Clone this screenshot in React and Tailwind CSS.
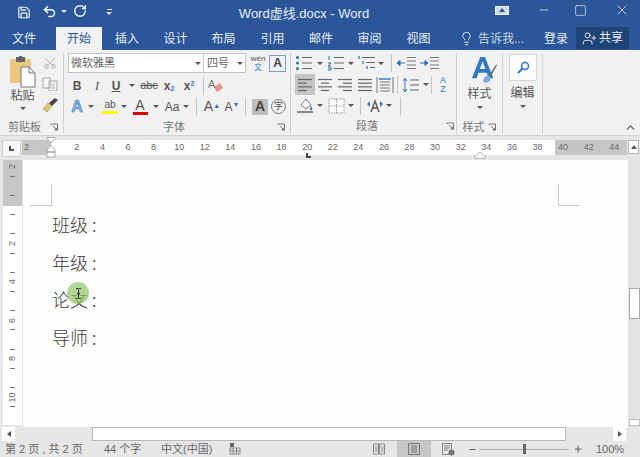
import React from 'react';
import { Save, Undo2, RotateCw, Minus, Square, X, Lightbulb, UserPlus, Scissors, ChevronUp, Plus } from 'lucide-react';

const Caret = ({ w = 'w-[10px]', color = 'border-t-[#555]' }) => (
  <span className={`${w} flex justify-center shrink-0`}>
    <span className={`w-0 h-0 border-x-[3px] border-x-transparent border-t-[3px] ${color}`}></span>
  </span>
);

const Launcher = () => (
  <svg width="9" height="9" viewBox="0 0 9 9" className="shrink-0">
    <path d="M1 1h6.5v6.5M1 1v1M3 3l4 4" fill="none" stroke="#777" strokeWidth="1" />
    <path d="M4 7.5h3.5V4z" fill="#777" />
  </svg>
);

const Divider = ({ cls = 'h-[18px]' }) => <span className={`w-px bg-[#c6c6c6] shrink-0 block ${cls}`}></span>;

// lines used by the list and alignment buttons, each row is [x1, x2]
const Lines = ({ rows, stroke = '#666' }) => (
  <svg width="18" height="14" viewBox="0 0 18 14">
    {rows.map((r, i) => (
      <line key={i} x1={r[0]} x2={r[1]} y1={1.5 + i * (11 / (rows.length - 1))} y2={1.5 + i * (11 / (rows.length - 1))} stroke={stroke} strokeWidth="1.2" />
    ))}
  </svg>
);

const Cell = ({ w = 'w-[20px]', children }) => (
  <span className={`${w} h-[20px] flex items-center justify-center shrink-0`}>{children}</span>
);

const BulletList = () => (
  <svg width="18" height="16" viewBox="0 0 18 16">
    <circle cx="2.5" cy="2.5" r="1.5" fill="#2b6cb0" /><circle cx="2.5" cy="8" r="1.5" fill="#2b6cb0" /><circle cx="2.5" cy="13.5" r="1.5" fill="#2b6cb0" />
    <path d="M7 2.5h10M7 8h10M7 13.5h10" stroke="#666" strokeWidth="1.1" />
  </svg>
);

const NumberList = () => (
  <svg width="18" height="16" viewBox="0 0 18 16">
    <path d="M2 1v4M1 8h3l-3 3h3M1 13h3v2H1" stroke="#2b6cb0" strokeWidth="1" fill="none" />
    <path d="M7 2.5h10M7 8h10M7 13.5h10" stroke="#666" strokeWidth="1.1" />
  </svg>
);

const MultiList = () => (
  <svg width="18" height="16" viewBox="0 0 18 16">
    <path d="M1 1v3M5 6v3M9 11v3" stroke="#2b6cb0" strokeWidth="1.2" />
    <path d="M4 2.5h13M8 7.5h9M12 12.5h5" stroke="#666" strokeWidth="1.1" />
  </svg>
);

const Indent = ({ flip }) => (
  <svg width="19" height="14" viewBox="0 0 19 14">
    <path d="M10 1.500h9M10 5h9M10 9h9M10 12.500h9" stroke="#777" strokeWidth="1" />
    {flip
      ? <path d="M0 7h5M5 4.500L8 7l-3 2.500z" stroke="#2b6cb0" strokeWidth="1" fill="#2b6cb0" />
      : <path d="M8 7H3M3 4.500L0 7l3 2.500z" stroke="#2b6cb0" strokeWidth="1" fill="#2b6cb0" />}
  </svg>
);

const ClipboardIcon = () => (
  <svg width="28" height="32" viewBox="0 0 28 32">
    <rect x="1" y="3" width="21" height="24" rx="1.5" fill="#e9c77f" />
    <rect x="7" y="1" width="9" height="5" fill="#666" />
    <rect x="10" y="0" width="3" height="2" fill="#666" />
    <path d="M12 11h8l6 6v14H12z" fill="#fff" stroke="#777" strokeWidth="1" />
    <path d="M20 11v6h6" fill="none" stroke="#777" strokeWidth="1" />
  </svg>
);

const CopyIcon = () => (
  <svg width="16" height="14" viewBox="0 0 16 14">
    <path d="M1 1h7v10H1zM7 4h8v10H7z" fill="#f6f6f6" stroke="#aaa" strokeWidth="1" />
    <path d="M9 7h4M9 9h4M9 11h4" stroke="#bbb" strokeWidth="1" />
  </svg>
);

const PainterIcon = () => (
  <svg width="16" height="14" viewBox="0 0 16 14">
    <path d="M1 11l5-6 4 3-5 6z" fill="#e3c27d" stroke="#a58a50" strokeWidth=".6" />
    <path d="M7 5l6-5 3 2-6 6z" fill="#444" />
  </svg>
);

const StylesIcon = () => (
  <svg width="26" height="28" viewBox="0 0 28 30">
    <path d="M1 24L10 1h5l9 23h-5l-2-6H8l-2 6zM9.5 14h6L12.5 5.500z" fill="#2f77bf" />
    <path d="M13 28c0-4 3-7 6-7l2 2c0 4-3 7-8 5z" fill="#7fa9d6" />
    <path d="M20 20l7-11 1 1-6 11z" fill="#666" />
  </svg>
);

const rulerNumbers = [2, 4, 6, 8, 10, 12, 14, 16, 18, 20, 22, 24, 26, 28, 30, 32, 34, 36, 38, 40, 42, 44];
const vRuler = ['2', 't', 'b', 't', 'b', 't', 'b', 't', '2', 't', 'b', 't', '4', 't', 'b', 't', '6', 't', 'b', 't', '8', 't', 'b', 't', '10', 't', 'b'];

const TitleBar = () => (
  <div className="h-[27px] flex items-center text-[#f2f5fa] shrink-0">
    <span className="ml-[17px] w-[14px] flex -mt-[3px]"><Save size={15} strokeWidth={2} /></span>
    <span className="ml-[11px] w-[16px] flex -mt-[5px]"><Undo2 size={15} strokeWidth={2.4} /></span>
    <span className="ml-[3px] w-[8px] flex -mt-[4px]"><Caret w="w-[6px]" color="border-t-[#dfe6f1]" /></span>
    <span className="ml-[4px] w-[16px] flex -mt-[6px]"><RotateCw size={14} strokeWidth={2.4} /></span>
    <span className="ml-[16px] w-[8px] flex flex-col items-center gap-[2px] -mt-[3px]">
      <span className="w-[5px] h-px bg-[#dfe6f1]"></span>
      <Caret w="w-[6px]" color="border-t-[#dfe6f1]" />
    </span>
    <span className="w-[382px] text-center text-[13px] leading-none text-[#e9eef6]">Word虚线.docx - Word</span>
    <span className="w-[14px] h-[9px] border border-[#eef2f8] bg-[#cfdaea] flex items-center justify-center -mt-[7px]">
      <span className="w-0 h-0 border-x-[3px] border-x-transparent border-b-[4px] border-b-[#2b579a]"></span>
    </span>
    <span className="ml-[28px] flex -mt-[7px]"><Minus size={14} strokeWidth={1.2} /></span>
    <span className="ml-[23px] flex -mt-[7px]"><Square size={13} strokeWidth={1.2} /></span>
    <span className="ml-[27px] flex -mt-[7px]"><X size={16} strokeWidth={1.1} /></span>
  </div>
);

const Tabs = () => (
  <div className="h-[23px] flex items-stretch text-[12px] text-[#e8edf5] shrink-0">
    <span className="w-[48px] flex items-center justify-center">文件</span>
    <span className="ml-[8px] w-[46px] flex items-center justify-center bg-[#f1f1f1] text-[#2b579a]">开始</span>
    <span className="w-[50px] flex items-center justify-center">插入</span>
    <span className="w-[47px] flex items-center justify-center">设计</span>
    <span className="w-[49px] flex items-center justify-center">布局</span>
    <span className="w-[49px] flex items-center justify-center">引用</span>
    <span className="w-[48px] flex items-center justify-center">邮件</span>
    <span className="w-[49px] flex items-center justify-center">审阅</span>
    <span className="w-[49px] flex items-center justify-center">视图</span>
    <span className="ml-[16px] w-[73px] flex items-center text-[#c9d6e8]">
      <Lightbulb size={15} strokeWidth={1.4} className="mr-[4px] text-[#eef2f8]" />告诉我...
    </span>
    <span className="ml-[12px] flex items-center">登录</span>
    <span className="ml-[8px] w-[53px] mb-[1px] flex items-center justify-center gap-[2px] bg-[#1f4478]">
      <UserPlus size={15} strokeWidth={1.5} />共享
    </span>
  </div>
);

const ClipboardGroup = () => (
  <div className="w-[64px] shrink-0 flex flex-col border-r border-[#d0d0d0] mt-[3px] mb-[2px] h-[81px] text-[#555]">
    <div className="flex h-[66px]">
      <div className="w-[40px] flex flex-col items-center pl-[5px]">
        <span className="mt-[3px] flex"><ClipboardIcon /></span>
        <span className="text-[12px] leading-[14px] mt-[1px]">粘贴</span>
        <span className="mt-[4px]"><Caret /></span>
      </div>
      <div className="w-[20px] flex flex-col items-center gap-[7px] pt-[3px]">
        <Scissors size={14} strokeWidth={1.2} className="text-[#999] -rotate-90" />
        <CopyIcon />
        <PainterIcon />
      </div>
    </div>
    <div className="flex items-center mt-[1px] pl-[8px] text-[11px] leading-[14px] text-[#777]">
      <span>剪贴板</span>
      <span className="ml-[9px]"><Launcher /></span>
    </div>
  </div>
);

const FontGroup = () => (
  <div className="w-[227px] shrink-0 flex flex-col border-r border-[#d0d0d0] mt-[3px] mb-[2px] h-[81px] text-[#555]">
    <div className="flex items-center h-[20px] pl-[4px]">
      <span className="w-[136px] h-[20px] border border-[#c4c4c4] bg-white flex items-center justify-between pl-[2px] text-[11px] text-[#666]">
        微软雅黑<Caret />
      </span>
      <span className="w-[42px] h-[20px] border border-l-0 border-[#c4c4c4] bg-white flex items-center justify-between pl-[3px] text-[11px] text-[#666]">
        四号<Caret />
      </span>
      <span className="w-[22px] flex flex-col items-center text-[8px] leading-[9px] ml-[1px]">
        <span className="text-[#555]">wén</span>
        <span className="text-[#2f77bf]">文</span>
      </span>
      <span className="w-[17px] h-[17px] border border-[#7f9fc6] bg-[#eef2f7] flex items-center justify-center text-[12px] font-bold text-[#444]">A</span>
    </div>
    <div className="flex items-center h-[21px] mt-[2px] pl-[3px] text-[#555]">
      <Cell><b className="text-[12px]">B</b></Cell>
      <Cell><i className="text-[12px] [font-family:'Liberation_Serif',serif]">I</i></Cell>
      <Cell w="w-[18px]"><u className="text-[12px] font-bold">U</u></Cell>
      <Caret w="w-[14px]" />
      <Cell><s className="text-[11px]">abc</s></Cell>
      <Cell><span className="text-[12px] font-bold">x<sub className="text-[7px] text-[#2f77bf]">2</sub></span></Cell>
      <Cell><span className="text-[12px] font-bold">x<sup className="text-[7px] text-[#2f77bf]">2</sup></span></Cell>
      <span className="ml-[4px]"><Divider /></span>
      <span className="ml-[4px]">
        <svg width="16" height="16" viewBox="0 0 16 16">
          <path d="M6 9l6-4 3 5-6 4z" fill="#e98f8f" />
          <text x="0" y="10" fontSize="11" fill="#777" fontFamily="Liberation Sans">A</text>
        </svg>
      </span>
    </div>
    <div className="flex items-center h-[21px] pl-[3px]">
      <Cell><span className="text-[16px] font-bold text-[#8fb8e6] [-webkit-text-stroke:0.6px_#2f77bf]">A</span></Cell>
      <Caret w="w-[7px]" />
      <span className="ml-[7px] w-[18px] flex flex-col items-center text-[10px] leading-[12px]">
        <span>ab</span><span className="w-[16px] h-[3px] bg-[#ffff00]"></span>
      </span>
      <Caret w="w-[10px]" />
      <span className="ml-[3px] w-[16px] flex flex-col items-center text-[14px] leading-[14px] text-[#555]">
        <span>A</span><span className="w-[15px] h-[3px] bg-[#e00000]"></span>
      </span>
      <Caret w="w-[15px]" />
      <span className="w-[18px] text-[12px] text-center">Aa</span>
      <Caret w="w-[9px]" />
      <span className="ml-[6px]"><Divider /></span>
      <span className="ml-[5px] w-[20px] text-[14px] text-center">A<sup className="text-[7px] text-[#2f77bf]">▲</sup></span>
      <span className="w-[20px] text-[12px] text-center">A<sup className="text-[7px] text-[#2f77bf]">▼</sup></span>
      <span className="ml-[3px]"><Divider /></span>
      <span className="ml-[6px] w-[16px] h-[16px] bg-[#bdbdbd] flex items-center justify-center text-[14px] font-bold text-[#444]">A</span>
      <span className="ml-[3px] w-[15px] h-[15px] rounded-full border border-[#777] flex items-center justify-center text-[9px]">字</span>
    </div>
    <div className="flex items-center mt-[3px] h-[14px] text-[11px] leading-[14px] text-[#777]">
      <span className="ml-[95px] w-[30px] text-center">字体</span>
      <span className="ml-[88px]"><Launcher /></span>
    </div>
  </div>
);

const ParagraphGroup = () => (
  <div className="w-[166px] shrink-0 flex flex-col border-r border-[#d0d0d0] mt-[3px] mb-[2px] h-[81px] text-[#555]">
    <div className="flex items-center h-[20px] pl-[3px]">
      <Cell><BulletList /></Cell>
      <Caret w="w-[12px]" />
      <Cell><NumberList /></Cell>
      <Caret />
      <span className="ml-px"><Cell><MultiList /></Cell></span>
      <Caret w="w-[8px]" />
      <span className="ml-[6px]"><Divider /></span>
      <span className="ml-[4px]"><Cell><Indent /></Cell></span>
      <span className="ml-[3px]"><Cell><Indent flip /></Cell></span>
    </div>
    <div className="flex items-center h-[21px] mt-[1px] pl-[4px]">
      <span className="w-[20px] h-[21px] bg-[#c4c4c4] flex items-center justify-center"><Lines rows={[[2, 16], [2, 11], [2, 16], [2, 11]]} /></span>
      <Cell><Lines rows={[[2, 16], [5, 13], [2, 16], [5, 13]]} /></Cell>
      <Cell><Lines rows={[[2, 16], [7, 16], [2, 16], [7, 16]]} /></Cell>
      <Cell><Lines rows={[[2, 16], [2, 16], [2, 16], [2, 16]]} /></Cell>
      <Cell>
        <svg width="18" height="16" viewBox="0 0 18 16">
          <path d="M1 0v16M17 0v16M4 5h10M4 8h10M4 11h10M4 14h10" stroke="#777" strokeWidth="1" />
          <path d="M3 2h12" stroke="#2f77bf" strokeWidth="1.4" />
        </svg>
      </Cell>
      <span className="ml-[2px]"><Divider /></span>
      <span className="ml-[3px]">
        <Cell>
          <svg width="16" height="16" viewBox="0 0 16 16">
            <path d="M2 1v14M0 4l2-3 2 3M0 12l2 3 2-3" stroke="#2f77bf" strokeWidth="1" fill="none" />
            <path d="M7 3h9M7 8h9M7 13h9" stroke="#666" strokeWidth="1.1" />
          </svg>
        </Cell>
      </span>
      <Caret />
      <Divider />
      <span className="ml-[1px]"><Cell><span className="text-[9px] leading-[9px] text-[#2f77bf] text-center">A<br />Z</span></Cell></span>
    </div>
    <div className="flex items-center h-[21px] pl-[4px]">
      <Cell>
        <svg width="18" height="17" viewBox="0 0 18 17">
          <path d="M5 8l5-6 5 6-5 4z" fill="#fff" stroke="#777" strokeWidth="1" />
          <path d="M15 9c1 2 2 3 1 4s-2 0-2-1z" fill="#2f77bf" />
          <path d="M1 15h16" stroke="#888" strokeWidth="2" />
        </svg>
      </Cell>
      <Caret />
      <span className="ml-px"><Cell>
        <svg width="17" height="16" viewBox="0 0 17 16">
          <path d="M1 1h15v14H1zM8.500 1v14M1 8h15" fill="#fff" stroke="#999" strokeWidth="1" strokeDasharray="1.500 1" />
        </svg>
      </Cell></span>
      <Caret />
      <span className="ml-[4px]"><Divider /></span>
      <span className="ml-[4px]"><Cell>
        <svg width="18" height="15" viewBox="0 0 18 15">
          <path d="M5 14L9 3l4 11M6.500 10h5" stroke="#555" strokeWidth="1.400" fill="none" />
          <path d="M1 6l3-3v6zM17 6l-3-3v6z" fill="#2f77bf" />
        </svg>
      </Cell></span>
      <Caret w="w-[8px]" />
      <span className="ml-[7px]"><Divider /></span>
    </div>
    <div className="flex items-center mt-[3px] h-[14px] text-[11px] leading-[14px] text-[#777]">
      <span className="ml-[61px] w-[30px] text-center">段落</span>
      <span className="ml-[64px]"><Launcher /></span>
    </div>
  </div>
);

const StylesGroup = () => (
  <div className="w-[46px] shrink-0 flex flex-col items-center border-r border-[#d0d0d0] mt-[3px] mb-[2px] h-[81px] text-[#555]">
    <div className="h-[66px] flex flex-col items-center">
      <span className="mt-[3px] ml-[8px] w-[26px] flex"><StylesIcon /></span>
      <span className="text-[12px] leading-[14px] mt-[3px]">样式</span>
      <span className="mt-[5px]"><Caret /></span>
    </div>
    <div className="flex items-center mt-[1px] text-[11px] leading-[14px] text-[#777] gap-[3px]">
      <span>样式</span><Launcher />
    </div>
  </div>
);

const EditGroup = () => (
  <div className="w-[40px] shrink-0 flex flex-col items-center border-r border-[#d0d0d0] mt-[3px] mb-[2px] h-[81px] text-[#555]">
    <span className="mt-px w-[28px] h-[27px] bg-[#fbfbfb] border border-[#d6d6d6] flex items-center justify-center">
      <svg width="14" height="14" viewBox="0 0 14 14">
        <circle cx="9" cy="5" r="3.500" fill="none" stroke="#2f77bf" strokeWidth="1.500" />
        <path d="M6.500 7.500L2 12" stroke="#2f77bf" strokeWidth="2" />
      </svg>
    </span>
    <span className="text-[12px] leading-[14px] mt-[5px]">编辑</span>
    <span className="mt-[5px]"><Caret /></span>
  </div>
);

const Ribbon = () => (
  <div className="h-[86px] bg-[#f1f1f1] border-b border-[#d2d2d2] flex shrink-0 relative">
    <ClipboardGroup />
    <FontGroup />
    <ParagraphGroup />
    <StylesGroup />
    <EditGroup />
    <ChevronUp size={13} strokeWidth={2} className="absolute right-[3px] bottom-[1px] text-[#555]" />
  </div>
);

const HRuler = () => (
  <div className="h-[24px] bg-[#e6e6e6] flex items-start pt-[4px] shrink-0">
    <span className="ml-[2px] w-[19px] h-[17px] bg-[#f7f7f7] border border-[#d0d0d0] flex items-center justify-center">
      <span className="w-[5px] h-[5px] border-l-2 border-b-2 border-[#555]"></span>
    </span>
    <div className="ml-[1px] w-[605px] h-[15px] flex relative text-[9px] leading-[15px] text-[#666]">
      <span className="w-[29px] bg-[#c6c6c6] pl-[2px]">2</span>
      <span className="w-[504px] bg-white"></span>
      <span className="w-[72px] bg-[#c6c6c6]"></span>
      <div className="absolute left-[42px] top-0 flex">
        {rulerNumbers.map((n) => (
          <span key={n} className="w-[25.6px] text-center">{n}</span>
        ))}
      </div>
      {/* indent markers and tab stop lying over the ruler */}
      <svg width="10" height="22" viewBox="0 0 10 22" className="absolute left-[24px] -top-[3px]">
        <path d="M1 .5h8v1L5 6 1 1.500zM5 8l4 5v2H1v-2z M1 15h8v5H1z" fill="#fff" stroke="#999" strokeWidth=".8" />
      </svg>
      <span className="absolute left-[284px] top-[13px] w-[5px] h-[5px] border-l-2 border-b-2 border-[#444]"></span>
      <svg width="12" height="8" viewBox="0 0 12 8" className="absolute left-[452px] top-[11px]">
        <path d="M1 7.500V5l5-4 5 4v2.500z" fill="#fff" stroke="#999" strokeWidth=".8" />
      </svg>
    </div>
    <span className="ml-[1px] w-[11px] h-[14px] bg-white border border-[#b5b5b5] flex items-center justify-center">
      <span className="w-0 h-0 border-x-[3px] border-x-transparent border-b-[4px] border-b-[#555]"></span>
    </span>
  </div>
);

const VRuler = () => (
  <div className="w-[23px] shrink-0 bg-[#e6e6e6] flex justify-end pr-[1px]">
    <div className="w-[19px] h-[265px] flex flex-col items-center pt-[2px] text-[9px] text-[#666] bg-[linear-gradient(#c6c6c6_46px,#ffffff_46px)]">
      {vRuler.map((c, i) => (
        <span key={i} className="h-[9.6px] w-full shrink-0 flex items-center justify-center">
          {c === 't' && <span className="w-[5px] h-px bg-[#777]"></span>}
          {c !== 't' && c !== 'b' && <span className="-rotate-90 leading-none">{c}</span>}
        </span>
      ))}
    </div>
  </div>
);

const lines = ['班级 :', '年级 :', '论文 :', '导师 :'];

const Page = () => (
  <div className="flex-1 bg-[#fdfdfd] relative overflow-hidden">
    <div className="flex justify-between pt-[24px] pl-[7px] pr-[48px]">
      <span className="w-[22px] h-[22px] border-r border-b border-[#c9c9c9]"></span>
      <span className="w-[22px] h-[22px] border-l border-b border-[#c9c9c9]"></span>
    </div>
    <div className="pl-[29px] -mt-px text-[18px] leading-[38px] text-[#3a3a3a]">
      {lines.map((l) => (
        <div key={l} className="h-[37.700px] [font-family:'Noto_Sans_CJK_SC','Liberation_Serif',serif] font-light">{l}</div>
      ))}
    </div>
    <div className="absolute left-[44px] top-[122px] w-[22px] h-[22px] rounded-full bg-[#8fc468]/70 flex items-center justify-center">
      <svg width="7" height="11" viewBox="0 0 7 11">
        <path d="M1 .5h2l.5.5.5-.5h2M3.500 1v9M1 10.500h2l.5-.5.5.5h2M2 5.500h3" fill="none" stroke="#333" strokeWidth="1" />
      </svg>
    </div>
  </div>
);

const VScroll = () => (
  <div className="w-[12px] shrink-0 bg-[#e3e3e3] flex flex-col items-end">
    <span className="mt-[128px] w-[11px] h-[31px] bg-white border border-[#a8a8a8]"></span>
    <span className="mt-auto mb-[1px] w-[11px] h-[7px] bg-white border border-[#c0c0c0]"></span>
  </div>
);

const HScroll = () => (
  <div className="h-[14px] bg-[#e6e6e6] flex items-stretch shrink-0">
    <span className="ml-[2px] w-[13px] bg-white flex items-center justify-center">
      <span className="w-0 h-0 border-y-[3px] border-y-transparent border-r-[4px] border-r-[#555]"></span>
    </span>
    <span className="w-[77px]"></span>
    <span className="w-[474px] bg-white border border-[#b8b8b8]"></span>
    <span className="w-[47px]"></span>
    <span className="w-[13px] bg-white flex items-center justify-center">
      <span className="w-0 h-0 border-y-[3px] border-y-transparent border-l-[4px] border-l-[#555]"></span>
    </span>
  </div>
);

const StatusBar = () => (
  <div className="h-[16px] bg-[#e6e6e6] flex items-center text-[11px] text-[#666] shrink-0">
    <span className="ml-[5px] w-[99px]">第 2 页 , 共 2 页</span>
    <span className="w-[57px]">44 个字</span>
    <span className="w-[68px]">中文(中国)</span>
    <svg width="12" height="12" viewBox="0 0 12 12">
      <path d="M1 5h10v6H1zM4 5v6M7.500 5v6M1 8h10" fill="none" stroke="#888" strokeWidth="1" />
      <path d="M1 0h4v4H1z" fill="#666" />
    </svg>
    <span className="ml-[132px]">
      <svg width="12" height="12" viewBox="0 0 12 12" className="block">
        <path d="M.5 1h5v10h-5zM6.500 1h5v10h-5zM2 4h2.500M2 6h2.500M2 8h2.500M8 4h2.500M8 6h2.500M8 8h2.500" fill="none" stroke="#888" strokeWidth="1" />
      </svg>
    </span>
    <span className="ml-[12px] w-[34px] h-[16px] bg-[#c6c6c6] flex items-center justify-center">
      <svg width="12" height="12" viewBox="0 0 12 12">
        <path d="M.5.500h11v11H.5zM3 3h6M3 5h6M3 7h6M3 9h6" fill="none" stroke="#777" strokeWidth="1" />
      </svg>
    </span>
    <span className="ml-[11px]">
      <svg width="13" height="13" viewBox="0 0 13 13" className="block">
        <path d="M.5.500h9v11h-9zM2 3h6M2 5h6M2 7h4" fill="none" stroke="#888" strokeWidth="1" />
        <circle cx="9.500" cy="9.500" r="3" fill="#777" />
      </svg>
    </span>
    <span className="ml-[13px] text-[#666]"><Minus size={9} strokeWidth={3} /></span>
    <span className="ml-[2px] w-[90px] h-px bg-[#b0b0b0] flex items-center justify-center">
      <span className="w-[3px] h-[10px] bg-[#666]"></span>
    </span>
    <span className="ml-[4px] text-[#666]"><Plus size={10} strokeWidth={2.6} /></span>
    <span className="ml-[13px]">100%</span>
  </div>
);

const App = () => (
  <div className="w-[640px] h-[457px] overflow-hidden flex flex-col bg-[#2b579a] [font-family:'Liberation_Sans','Noto_Sans_CJK_SC',sans-serif]">
    <TitleBar />
    <Tabs />
    <Ribbon />
    <HRuler />
    <div className="h-[267px] flex shrink-0">
      <VRuler />
      <Page />
      <VScroll />
    </div>
    <HScroll />
    <StatusBar />
  </div>
);

export default App;
